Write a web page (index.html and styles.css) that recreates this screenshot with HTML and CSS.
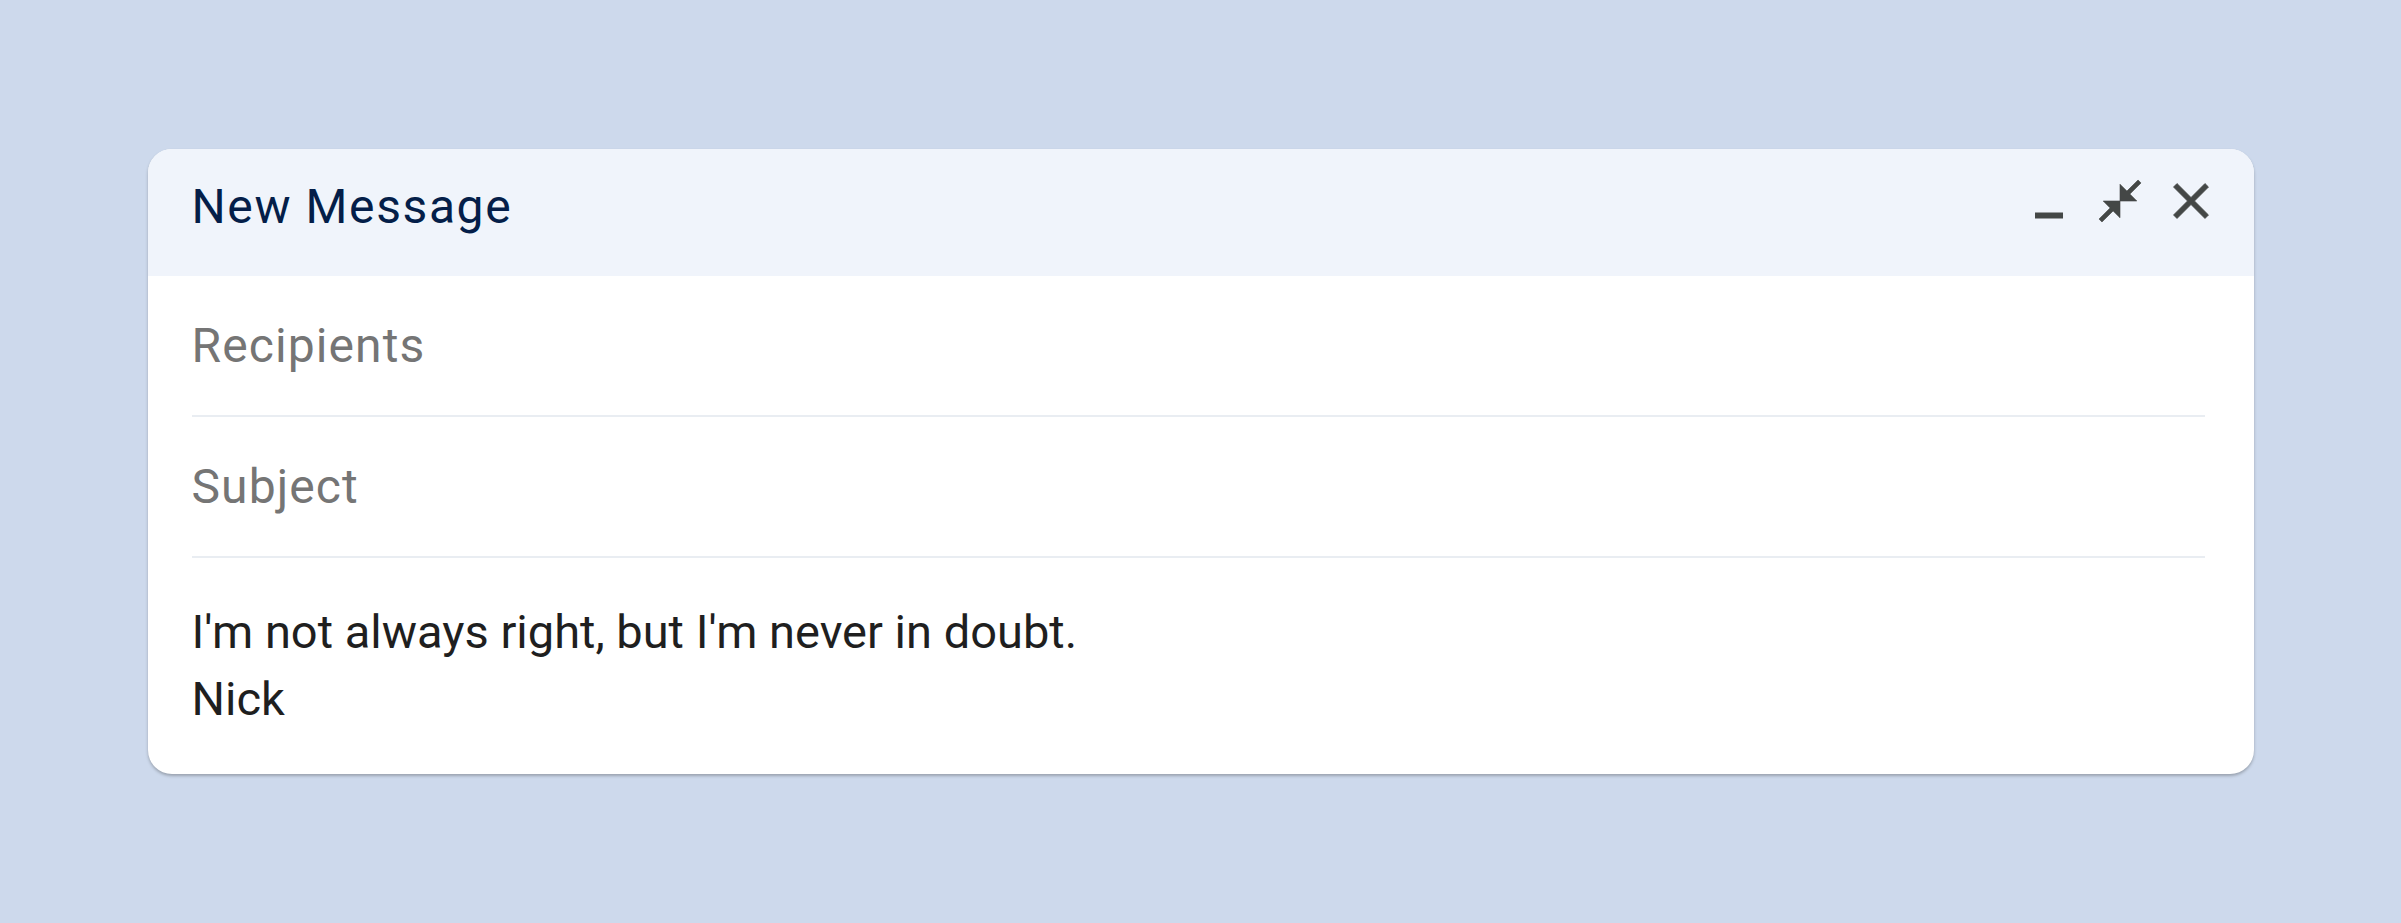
FILE: index.html
```html
<!DOCTYPE html>
<html lang="en">
<head>
<meta charset="utf-8">
<title>New Message</title>
<link rel="stylesheet" href="styles.css">
</head>
<body>
<div class="compose">
  <div class="compose-header">
    <div class="compose-title">New Message</div>
    <div class="compose-actions">
      <button class="icon-btn" aria-label="Minimize">
        <svg viewBox="-0.86 0.92 25.71 25.71" width="60" height="60"><path d="M6 18.7h12v2.6H6z"/></svg>
      </button>
      <button class="icon-btn" aria-label="Exit full screen">
        <svg class="bold" viewBox="-2.29 -2.29 28.57 28.57" width="60" height="60"><path d="M22 3.41 16.71 8.7 20 12h-8V4l3.29 3.29L20.59 2 22 3.41zM3.41 22l5.29-5.29L12 20v-8H4l3.29 3.29L2 20.59 3.41 22z"/></svg>
      </button>
      <button class="icon-btn" aria-label="Close">
        <svg class="bold" viewBox="0 0 24 24" width="60" height="60"><path d="M19 6.41 17.59 5 12 10.59 6.41 5 5 6.41 10.59 12 5 17.59 6.41 19 12 13.41 17.59 19 19 17.59 13.41 12z"/></svg>
      </button>
    </div>
  </div>
  <div class="compose-body">
    <div class="field"><span class="placeholder">Recipients</span></div>
    <div class="field"><span class="placeholder">Subject</span></div>
    <div class="message">
      <div>I'm not always right, but I'm never in doubt.</div>
      <div>Nick</div>
    </div>
  </div>
</div>
</body>
</html>
```
FILE: styles.css
```css
* { box-sizing: border-box; }
html, body { margin: 0; padding: 0; }
body {
  min-height: 100vh;
  background: #cdd9ec;
  display: flex;
  align-items: center;
  justify-content: center;
  font-family: Roboto, "Liberation Sans", Arial, sans-serif;
}
.compose {
  width: 2106px;
  background: #ffffff;
  border-radius: 24px;
  overflow: hidden;
  box-shadow: 0 2px 3px rgba(60, 64, 67, 0.35);
}
.compose-header {
  height: 127px;
  background: #f0f4fb;
  display: flex;
  align-items: center;
  justify-content: space-between;
  padding: 0 33px 23px 44px;
}
.compose-title {
  font-size: 48px;
  letter-spacing: 1.6px;
  color: #041e49;
  margin-top: 10px;
}
.compose-actions {
  display: flex;
  align-items: center;
  gap: 11px;
}
.icon-btn {
  width: 60px;
  height: 60px;
  padding: 0;
  border: 0;
  background: transparent;
  display: flex;
}
.icon-btn svg { fill: #444746; display: block; }
.icon-btn svg.bold path {
  stroke: #444746;
  stroke-width: 0.3;
  stroke-linejoin: miter;
}
.compose-body {
  padding: 0 49px 0 44px;
}
.field {
  height: 141px;
  border-bottom: 2px solid #e9edf2;
  display: flex;
  align-items: center;
}
.placeholder {
  font-size: 48px;
  letter-spacing: 1.1px;
  color: #757575;
}
.message {
  padding: 40px 0 42px;
  font-size: 47px;
  line-height: 67px;
  color: #1f1f1f;
}
```
